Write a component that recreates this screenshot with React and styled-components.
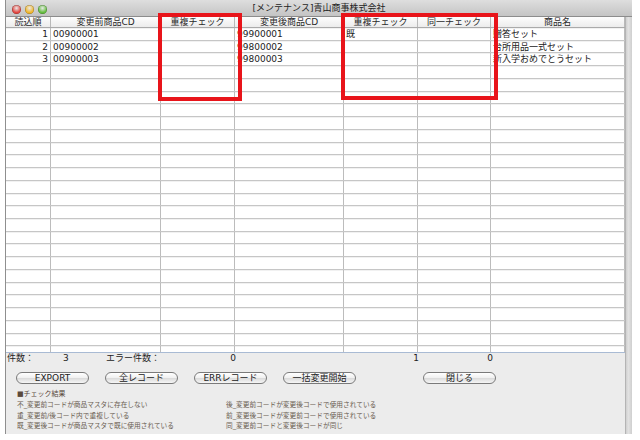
import React from 'react'
import styled, { createGlobalStyle } from 'styled-components'

const GlobalStyle = createGlobalStyle`
    html, body {
        margin: 0;
        padding: 0;
        background: #fff;
    }
    body {
        font-family: "DejaVu Sans", "Noto Sans CJK JP", sans-serif;
        color: #222;
    }
`;

const COLS = '45px 110px 74px 109px 74px 73px 134px';
const HEADERS = ['読込順', '変更前商品CD', '重複チェック', '変更後商品CD', '重複チェック', '同一チェック', '商品名'];
const ROWS = [
    ['1', '00900001', '', '99900001', '既', '', '贈答セット'],
    ['2', '00900002', '', '99800002', '', '', '台所用品一式セット'],
    ['3', '00900003', '', '99800003', '', '', '新入学おめでとうセット'],
];
const TOTAL_ROWS = 26;

function App() {
    const rows = [];
    for (let i = 0; i < TOTAL_ROWS; i++) {
        rows.push(ROWS[i] || ['', '', '', '', '', '', '']);
    }
    return (
        <Page>
            <GlobalStyle />
            <Window>
                <TitleBar>
                    <Lights>
                        <Light $c="#e2463f" />
                        <Light $c="#f0b52a" />
                        <Light $c="#63bd3e" />
                    </Lights>
                    <Title>[メンテナンス]青山商事株式会社</Title>
                </TitleBar>
                <Body>
                    <Main>
                        <Table>
                            <HeaderRow>
                                {HEADERS.map((h, i) => (
                                    <HeaderCell key={i}>{h}</HeaderCell>
                                ))}
                            </HeaderRow>
                            {rows.map((r, i) => (
                                <Row key={i}>
                                    {r.map((v, j) => (
                                        <Cell key={j} $right={j === 0}>{v}</Cell>
                                    ))}
                                </Row>
                            ))}
                        </Table>
                        <Panel>
                            <Summary>
                                <SumCell $w={56}>件数：</SumCell>
                                <SumCell $w={43}>3</SumCell>
                                <SumCell $w={131} $split>
                                    <span>エラー件数：</span>
                                    <span>0</span>
                                </SumCell>
                                <SumCell $w={183} $right>1</SumCell>
                                <SumCell $w={74} $right>0</SumCell>
                            </Summary>
                            <Buttons>
                                <Button>EXPORT</Button>
                                <Button>全レコード</Button>
                                <Button>ERRレコード</Button>
                                <Button>一括変更開始</Button>
                                <Button $far>閉じる</Button>
                            </Buttons>
                            <LegendTitle>■チェック結果</LegendTitle>
                            <Legend>
                                <span>不_変更前コードが商品マスタに存在しない</span>
                                <span>後_変更前コードが変更後コードで使用されている</span>
                                <span>重_変更前/後コード内で重複している</span>
                                <span>前_変更後コードが変更前コードで使用されている</span>
                                <span>既_変更後コードが商品マスタで既に使用されている</span>
                                <span>同_変更前コードと変更後コードが同じ</span>
                            </Legend>
                        </Panel>
                    </Main>
                    <SideStrip />
                </Body>
            </Window>
            <Mark $x={158} $y={13} $w={84} $h={88} />
            <Mark $x={341} $y={13} $w={157} $h={87} />
        </Page>
    )
}

const Page = styled.div`
    position: relative;
    width: 640px;
    height: 440px;
    overflow: hidden;
`;
const Window = styled.div`
    margin-left: 5px;
    width: 626px;
    height: 434px;
    border-left: 1px solid #8f8f8f;
    background: #ececec;
    display: flex;
    flex-direction: column;
`;
const TitleBar = styled.div`
    position: relative;
    height: 16px;
    flex: none;
    background: linear-gradient(#dedede, #c4c4c4);
    border-bottom: 1px solid #8c8c8c;
    display: flex;
    align-items: center;
    justify-content: center;
`;
const Lights = styled.div`
    position: absolute;
    left: 6px;
    top: 5px;
    display: flex;
    gap: 4px;
`;
const Light = styled.div`
    width: 9px;
    height: 9px;
    border-radius: 50%;
    background: radial-gradient(circle at 50% 35%, #fff8 0, ${p => p.$c} 60%);
    box-shadow: inset 0 0 0 0.5px #0005;
`;
const Title = styled.div`
    font-size: 9px;
    line-height: 10px;
    color: #1e1e1e;
    margin-top: -1px;
`;
const Body = styled.div`
    flex: 1;
    display: flex;
`;
const Main = styled.div`
    width: 619px;
    display: flex;
    flex-direction: column;
`;
const SideStrip = styled.div`
    flex: 1;
    background: linear-gradient(90deg, #d0d0d0, #e2e2e2 40%, #cfcfcf);
    border-left: 1px solid #b4b4b4;
`;
const Table = styled.div`
    height: 335px;
    overflow: hidden;
    background: #fff;
    border-bottom: 1px solid #a9bbd4;
    box-sizing: border-box;
    height: 336px;
`;
const HeaderRow = styled.div`
    display: grid;
    grid-template-columns: ${COLS};
    height: 11px;
    box-sizing: border-box;
    background: linear-gradient(#fdfdfd, #ececec);
    border-bottom: 1px solid #aaa;
`;
const HeaderCell = styled.div`
    font-size: 9px;
    line-height: 10px;
    text-align: center;
    color: #2a2a2a;
    border-right: 1px solid #b9b9b9;
    white-space: nowrap;
    overflow: hidden;
`;
const Row = styled.div`
    display: grid;
    grid-template-columns: ${COLS};
    height: 12.74px;
    box-sizing: border-box;
    border-bottom: 1px solid #c6c6c6;
    box-shadow: inset 0 1px 0 #f1f1f1;
`;
const Cell = styled.div`
    font-size: 9px;
    line-height: 12px;
    padding: 0 2px;
    text-align: ${p => (p.$right ? 'right' : 'left')};
    border-right: 1px solid #bcbcbc;
    white-space: nowrap;
    overflow: hidden;
`;
const Panel = styled.div`
    flex: 1;
    display: flex;
    flex-direction: column;
`;
const Summary = styled.div`
    display: flex;
    height: 11px;
    font-size: 9px;
    line-height: 11px;
    color: #222;
`;
const SumCell = styled.div`
    width: ${p => p.$w}px;
    flex: none;
    display: flex;
    justify-content: ${p => (p.$split ? 'space-between' : p.$right ? 'flex-end' : 'flex-start')};
    padding-left: 1px;
    box-sizing: border-box;
`;
const Buttons = styled.div`
    display: flex;
    gap: 16px;
    margin-top: 8px;
    padding-left: 10px;
`;
const Button = styled.button`
    width: 73px;
    height: 12px;
    padding: 0;
    margin-left: ${p => (p.$far ? '51px' : '0')};
    border: 1px solid #7a7a7a;
    border-radius: 6px;
    background: linear-gradient(#ffffff, #f1f1f1 45%, #dcdcdc 55%, #f6f6f6);
    font-family: "DejaVu Sans", "Noto Sans CJK JP", sans-serif;
    font-size: 9px;
    line-height: 10px;
    color: #222;
    cursor: pointer;
`;
const LegendTitle = styled.div`
    margin-top: 5px;
    padding-left: 11px;
    font-size: 7px;
    line-height: 10px;
    color: #5b4a3c;
`;
const Legend = styled.div`
    display: grid;
    grid-template-columns: 209px 1fr;
    margin-top: 1px;
    padding-left: 11px;
    font-size: 6.7px;
    line-height: 10.5px;
    color: #6a5d51;
    white-space: nowrap;
`;
const Mark = styled.div`
    position: absolute;
    left: ${p => p.$x}px;
    top: ${p => p.$y}px;
    width: ${p => p.$w}px;
    height: ${p => p.$h}px;
    box-sizing: border-box;
    border: 4px solid #e8141a;
`;

export default App
